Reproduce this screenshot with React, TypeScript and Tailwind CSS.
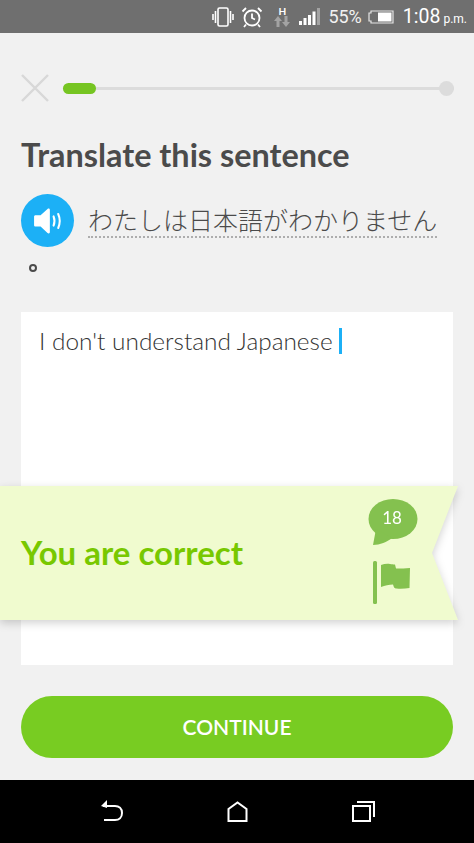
const VibrateIcon = () => (
  <svg width="22" height="20" viewBox="0 0 22 20" fill="none" stroke="#fff" strokeWidth="1.6">
    <rect x="6" y="1" width="10" height="18" rx="1.5" />
    <path d="M3.5 4v12M1 7v6M18.5 4v12M21 7v6" />
  </svg>
)

const AlarmIcon = () => (
  <svg width="22" height="22" viewBox="0 0 22 22" fill="none" stroke="#fff" strokeWidth="1.8">
    <circle cx="11" cy="12" r="7.5" />
    <path d="M11 7.5V12l3 1.5M1.5 5.5 5 2M20.5 5.5 17 2M5 18.5l-2 2.5M17 18.5l2 2.5" />
  </svg>
)

const DataIcon = () => (
  <div className="flex flex-col items-center w-[16px]">
    <span className="text-white text-[10px] leading-[10px] font-bold">H</span>
    <svg width="16" height="11" viewBox="0 0 16 11" fill="#a3a3a3">
      <path d="M4 0 8 5H5.5v6h-3V5H0zM12 11 8 6h2.500V0h3v6H16z" />
    </svg>
  </div>
)

const SignalIcon = () => (
  <svg width="21" height="17" viewBox="0 0 21 17" fill="#fff">
    <rect x="0" y="13" width="3" height="4" />
    <rect x="4.500" y="10" width="3" height="7" />
    <rect x="9" y="7" width="3" height="10" />
    <rect x="13.500" y="3.500" width="3" height="13.500" />
    <rect x="18" y="0" width="3" height="17" fill="#a3a3a3" />
  </svg>
)

const BatteryIcon = () => (
  <svg width="26" height="14" viewBox="0 0 26 14" fill="none">
    <path d="M3 3V1h22v12H3v-2H1V3z" stroke="#e5e5e5" strokeWidth="1.200" />
    <rect x="10" y="2.500" width="13.500" height="9" fill="#fff" />
  </svg>
)

const SpeakerIcon = () => (
  <svg width="30" height="26" viewBox="0 0 32 28" fill="#fff">
    <path d="M1 9.500c0-1 .7-1.600 1.500-1.600H8L15.500 1c1-.8 2.500-.4 2.500 1.200v23.600c0 1.600-1.500 2-2.500 1.200L8 20H2.500C1.700 20 1 19.400 1 18.500z" />
    <path d="M22 9c1.300 3.300 1.300 6.700 0 10" fill="none" stroke="#fff" strokeWidth="2.200" strokeLinecap="round" />
    <path d="M27 6.500c2.200 5 2.200 10 0 15" fill="none" stroke="#fff" strokeWidth="2.200" strokeLinecap="round" />
  </svg>
)

const CloseIcon = () => (
  <svg width="28" height="28" viewBox="0 0 28 28" stroke="#d8d8d8" strokeWidth="2.400">
    <path d="M1 1l26 26M27 1 1 27" />
  </svg>
)

const Bubble = () => (
  <div className="relative w-[50px] h-[46px]">
    <svg width="50" height="46" viewBox="0 0 50 46" fill="#84c14f" className="absolute inset-0">
      <ellipse cx="25" cy="20" rx="24.500" ry="20" />
      <path d="M8 30 5 46c7 0 14-3 19-7z" />
    </svg>
    <span className="absolute left-[-2px] right-0 top-[7px] text-center text-white text-[17px] leading-[24px] font-normal">18</span>
  </div>
)

const ReportFlag = () => (
  <svg width="38" height="44" viewBox="0 0 38 44" fill="#84c14f">
    <rect x="0" y="0" width="4" height="43" rx="1.500" />
    <path d="M8 4c3-1 6-1.500 9-1 2 .3 3 .5 5 .5l1 4c3 .3 7 0 14-.5l-.5 20c-4 .5-8 1-13 .5-2-.2-2.500-.7-3.500-4-4 0-8 1-12 2.500z" />
  </svg>
)

const BackIcon = () => (
  <svg width="24" height="22" viewBox="0 0 24 22" fill="none" stroke="#fff" strokeWidth="2">
    <path d="M3 6h12c4 0 7 2.500 7 7s-3 7-7 7H4" />
    <path d="M7 0 1 6l6 2z" fill="#fff" strokeWidth="0" />
  </svg>
)

const HomeIcon = () => (
  <svg width="21" height="21" viewBox="0 0 21 21" fill="none" stroke="#fff" strokeWidth="2">
    <path d="M1.500 20V8L10.500 1.500 19.500 8v12z" />
  </svg>
)

const RecentIcon = () => (
  <svg width="23" height="21" viewBox="0 0 23 21" fill="none" stroke="#fff" strokeWidth="2">
    <rect x="1" y="5" width="17" height="15" />
    <path d="M5 1h17v15" />
  </svg>
)

export default function App() {
  return (
    <div className="relative w-[474px] h-[843px] flex flex-col bg-[#f1f1f1] overflow-hidden font-['Lato','Noto_Sans_CJK_JP',sans-serif]">
      <div className="h-[33px] bg-[#6f6f6f] flex items-center justify-end pr-[7px] text-white shrink-0">
        <VibrateIcon />
        <div className="ml-[7px]"><AlarmIcon /></div>
        <div className="ml-[11px]"><DataIcon /></div>
        <div className="ml-[9px]"><SignalIcon /></div>
        <span className="ml-[8px] text-[18px] text-[#f2f2f2] font-['Roboto',sans-serif]">55%</span>
        <div className="ml-[6px]"><BatteryIcon /></div>
        <span className="ml-[9px] text-[19.500px] font-['Roboto',sans-serif]">1:08</span>
        <span className="ml-[3px] mt-[4px] text-[12px] font-['Roboto',sans-serif]">p.m.</span>
      </div>

      <div className="flex-1 flex flex-col px-[21px]">
        <div className="flex items-center mt-[41px] h-[28px]">
          <CloseIcon />
          <div className="relative flex-1 ml-[14px] mr-[-1px] h-[3px] bg-[#dcdcdc] flex items-center">
            <div className="absolute left-0 w-[33px] h-[11px] rounded-full bg-[#76c522]" />
            <div className="absolute right-0 w-[15px] h-[15px] rounded-full bg-[#dcdcdc]" />
          </div>
        </div>

        <h1 className="mt-[33px] text-[32.400px] leading-[40px] font-bold text-[#4b4b4b]">Translate this sentence</h1>

        <div className="flex mt-[19px] h-[53px]">
          <div className="w-[53px] h-[53px] rounded-full bg-[#1cb0f6] flex items-center justify-center shrink-0">
            <SpeakerIcon />
          </div>
          <span className="ml-[14px] mt-[8px] h-[36px] text-[25px] leading-[34px] whitespace-nowrap text-[#4b4b4b] border-b-2 border-dotted border-[#adadad] font-['Noto_Sans_CJK_JP',sans-serif] font-light">
            わたしは日本語がわかりません
          </span>
        </div>
        <div className="h-[18px] mt-[12px] ml-[8px] flex items-center">
          <div className="w-[8px] h-[8px] rounded-full border-2 border-[#4b4b4b]" />
        </div>

        <div className="mt-[35px] h-[353px] bg-white px-[18px] pt-[14px]">
          <div className="flex items-center h-[30px] text-[24.400px] font-light text-[#333333]">
            I don't understand Japanese
            <span className="ml-[6px] w-[3px] h-[26px] bg-[#1cb0f6]" />
          </div>
        </div>

        <button className="mt-[31px] h-[62px] rounded-full bg-[#78cc22] text-white text-[21px] font-semibold">
          CONTINUE
        </button>
      </div>

      <div className="h-[63px] bg-black flex items-center shrink-0 relative">
        <div className="absolute left-[100px] top-[20px]"><BackIcon /></div>
        <div className="absolute left-[227px] top-[21px]"><HomeIcon /></div>
        <div className="absolute left-[352px] top-[21px]"><RecentIcon /></div>
      </div>

      <div className="absolute left-0 top-[486px] w-[458px] h-[134px] drop-shadow-[0_3px_4px_rgba(0,0,0,0.18)]">
        <div className="w-full h-full bg-[#f0fbcf] flex items-center pl-[21px] [clip-path:polygon(0_0,100%_0,432px_50%,100%_100%,0_100%)]">
          <span className="text-[33px] font-bold text-[#78c800]">You are correct</span>
          <div className="absolute left-[368px] top-[13px] flex flex-col items-start">
            <Bubble />
            <div className="mt-[16px] ml-[5px]"><ReportFlag /></div>
          </div>
        </div>
      </div>
    </div>
  )
}
